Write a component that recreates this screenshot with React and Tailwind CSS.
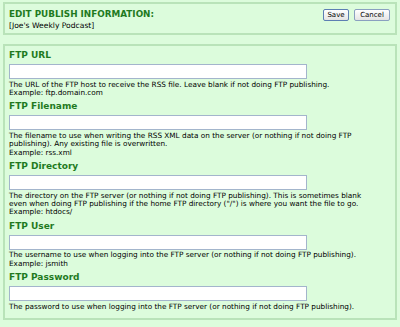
import React from "react";

const fields = [
  {
    label: "FTP URL",
    desc: [
      "The URL of the FTP host to receive the RSS file. Leave blank if not doing FTP publishing.",
      "Example: ftp.domain.com",
    ],
  },
  {
    label: "FTP Filename",
    desc: [
      "The filename to use when writing the RSS XML data on the server (or nothing if not doing FTP publishing). Any existing file is overwritten.",
      "Example: rss.xml",
    ],
  },
  {
    label: "FTP Directory",
    desc: [
      'The directory on the FTP server (or nothing if not doing FTP publishing). This is sometimes blank even when doing FTP publishing if the home FTP directory ("/") is where you want the file to go.',
      "Example: htdocs/",
    ],
  },
  {
    label: "FTP User",
    desc: [
      "The username to use when logging into the FTP server (or nothing if not doing FTP publishing).",
      "Example: jsmith",
    ],
  },
  {
    label: "FTP Password",
    desc: [
      "The password to use when logging into the FTP server (or nothing if not doing FTP publishing).",
    ],
  },
];

export default function App() {
  return (
    <div
      className="w-[400px] h-[327px] bg-[#dcfcdc] pt-[2px] px-[3px] overflow-hidden"
      style={{ fontFamily: '"DejaVu Sans", Verdana, sans-serif' }}
    >
      <div className="h-[33px] border-2 border-[#b9e3b9] flex justify-between pl-[4px] pr-[5px] pt-[5px]">
        <div>
          <div className="text-[8.8px] leading-[10px] font-bold text-[#1f7a1f]">
            EDIT PUBLISH INFORMATION:
          </div>
          <div className="text-[7.6px] leading-[9px] text-black mt-[2px]">
            [Joe's Weekly Podcast]
          </div>
        </div>
        <div className="flex gap-[5px] items-start">
          <button className="h-[12px] w-[26px] rounded-[2px] border border-[#5d7fb3] bg-gradient-to-b from-white to-[#e4e4e4] text-[7px] leading-[10px] text-black p-0">
            Save
          </button>
          <button className="h-[12px] w-[36px] rounded-[2px] border border-[#8aa0c0] bg-gradient-to-b from-white to-[#e4e4e4] text-[7px] leading-[10px] text-black p-0">
            Cancel
          </button>
        </div>
      </div>
      <div className="mt-[9px] h-[276px] border-2 border-[#b9e3b9] pl-[4px] pt-[4px] flex flex-col gap-[4px]">
        {fields.map((f) => (
          <div key={f.label}>
            <div className="text-[9px] leading-[11px] font-bold text-[#1f7a1f]">
              {f.label}
            </div>
            <div className="mt-[3px] h-[15px] w-[298px] bg-white border border-[#a3b5cc]" />
            <div className="mt-[1.5px] w-[368px] text-[7.3px] leading-[8.4px] text-black">
              {f.desc.map((d, i) => (
                <div key={i}>{d}</div>
              ))}
            </div>
          </div>
        ))}
      </div>
    </div>
  );
}
